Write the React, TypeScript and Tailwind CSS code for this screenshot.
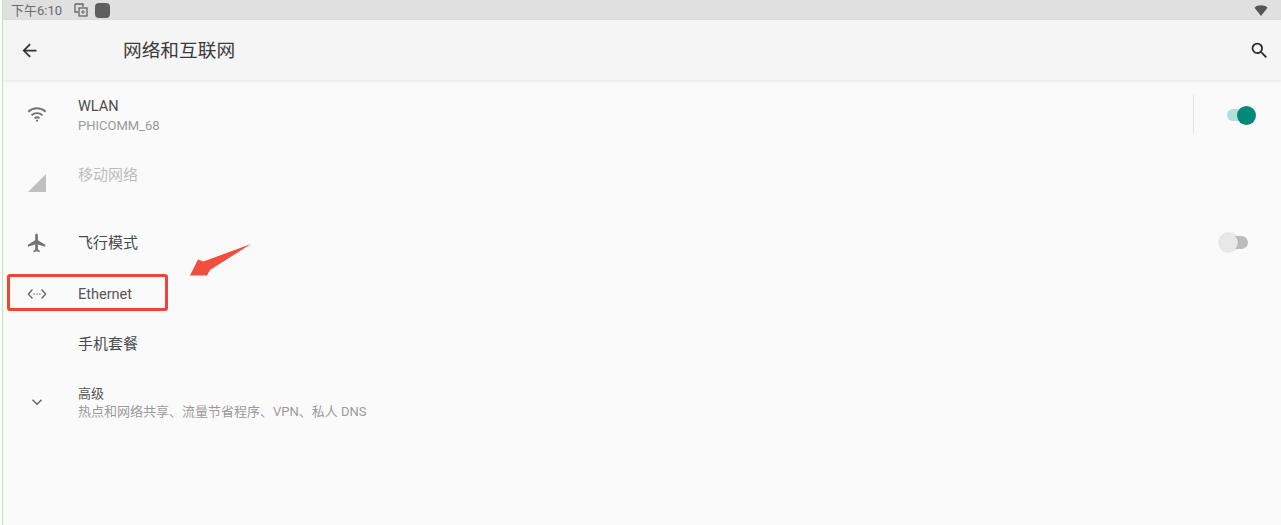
import React from "react";

function Row({ h, icon, title, sub, titleCls = "text-[15px] text-[#4a4a4a]", right }: { h: string; icon?: React.ReactNode; title: string; sub?: string; titleCls?: string; right?: React.ReactNode }) {
  return (
    <div className={`flex items-center ${h}`}>
      <div className="w-[75px] shrink-0 flex justify-center pr-[7px]">{icon}</div>
      <div className="flex-1 min-w-0">
        <div className={`leading-[18px] ${titleCls}`}>{title}</div>
        {sub && <div className="text-[13px] leading-[18px] text-[#9a9a9a]">{sub}</div>}
      </div>
      {right}
    </div>
  );
}

export default function App() {
  return (
    <div className="w-[1281px] h-[525px] overflow-hidden bg-white pl-[2px] font-['Roboto','Noto_Sans_CJK_SC',sans-serif]">
      <div className="relative h-full bg-[#fafafa] border-l border-[#b5f5a5]">
        {/* status bar */}
        <div className="h-[20px] bg-[#e0e0e0] flex items-center pl-[8px] pr-[13px] text-[#6a6a6a]">
          <span className="text-[13px] leading-none w-[62px]">下午6:10</span>
          <svg width="16" height="16" viewBox="0 0 16 16" fill="none" stroke="#666" strokeWidth="1.3">
            <path d="M2 2h8v3M2 2v8h3" />
            <rect x="6" y="6" width="8" height="8" />
            <path d="M8 10h4M10 8v4" strokeWidth="1" />
          </svg>
          <div className="ml-[6px] w-[15px] h-[15px] rounded-[4px] bg-[#5f5f5f]" />
          <div className="flex-1" />
          <svg width="14" height="13" viewBox="0 0 15 13"><path d="M0.5 3.5C2.5 1.5 5 .8 7.5 .8S12.500 1.500 14.500 3.500L7.500 12.500Z" fill="#555" /></svg>
        </div>
        {/* toolbar */}
        <div className="h-[60px] bg-[#f5f5f5] flex items-center shadow-[0_1px_3px_rgba(0,0,0,0.1)] relative">
          <div className="w-[120px] pl-[16px] shrink-0">
            <svg width="21" height="21" viewBox="0 0 24 24" fill="#333"><path d="M20 11H7.830l5.590-5.590L12 4l-8 8 8 8 1.410-1.410L7.830 13H20z" /></svg>
          </div>
          <div className="flex-1 pt-[2px] text-[18.7px] text-[#3a3a3a]">网络和互联网</div>
          <svg className="mr-[11px]" width="21" height="21" viewBox="0 0 24 24" fill="#2a2a2a"><path d="M15.500 14h-.790l-.280-.270A6.470 6.470 0 0 0 16 9.500 6.500 6.500 0 1 0 9.500 16c1.610 0 3.090-.590 4.230-1.570l.270.280v.790l5 4.990L20.490 19l-4.990-5zm-6 0C7.010 14 5 11.990 5 9.500S7.010 5 9.500 5 14 7.010 14 9.500 11.990 14 9.500 14z" /></svg>
        </div>
        {/* list */}
        <div className="flex flex-col pt-[2px]">
          <div className="flex items-center h-[66px]">
            <div className="w-[75px] shrink-0 flex justify-center pr-[7px]">
              <svg className="mb-[2px]" width="22" height="22" viewBox="0 0 24 24" fill="none" stroke="#757575" strokeWidth="2"><path d="M2.500 9.500C8 4.500 16 4.500 21.500 9.500" /><path d="M6 13.300c3.500-3 8.500-3 12 0" /><path d="M9.300 16.600c1.600-1.200 3.800-1.200 5.400 0" /><circle cx="12" cy="19.300" r="1.200" fill="#757575" stroke="none" /></svg>
            </div>
            <div className="flex-1 min-w-0 pt-[3px]">
              <div className="text-[14.5px] leading-[18px] text-[#4a4a4a]">WLAN</div>
              <div className="text-[13px] leading-[18px] mt-[1px] text-[#9a9a9a]">PHICOMM_68</div>
            </div>
            <div className="flex items-center h-[38px] mb-[2px] border-l border-[#e4e4e4] pl-[33px] pr-[27px]">
              <div className="relative mt-[2px] w-[27px] h-[12px] rounded-full bg-[#b2dfd8]">
                <div className="absolute right-[-2px] top-[-3px] w-[19px] h-[19px] rounded-full bg-[#00897b]" />
              </div>
            </div>
          </div>
          <Row
            h="h-[54px]"
            title="移动网络"
            titleCls="text-[15px] text-[#bdbdbd]"
            icon={<svg width="18" height="18" viewBox="0 0 18 18" className="mt-[16px]"><path d="M0 18L18 0V18Z" fill="#bfbfbf" /></svg>}
          />
          <Row
            h="h-[82px]"
            title="飞行模式"
            icon={<svg width="22" height="22" viewBox="0 0 24 24" fill="#757575"><path d="M21 16v-2l-8-5V3.500c0-.830-.670-1.500-1.500-1.500S10 2.670 10 3.500V9l-8 5v2l8-2.500V19l-2 1.500V22l3.500-1 3.500 1v-1.500L13 19v-5.500z" /></svg>}
            right={
              <div className="relative mb-[2px] w-[24px] h-[13px] mr-[33px] rounded-full bg-[#bdbdbd]">
                <div className="absolute left-[-5px] top-[-3px] w-[19px] h-[19px] rounded-full bg-[#e8e8e8] shadow-[0_0_2px_rgba(0,0,0,0.2)]" />
              </div>
            }
          />
          <Row
            h="h-[22px]"
            title="Ethernet"
            titleCls="text-[14.5px] text-[#555]"
            icon={<svg className="mb-[2px]" width="20" height="14" viewBox="0 0 22 14" fill="none" stroke="#666" strokeWidth="1.5"><path d="M6 2L1.500 7L6 12M16 2L20.500 7L16 12" /><circle cx="7.800" cy="7" r=".9" fill="#666" stroke="none" /><circle cx="11" cy="7" r=".9" fill="#666" stroke="none" /><circle cx="14.200" cy="7" r=".9" fill="#666" stroke="none" /></svg>}
          />
          <Row h="h-[76px]" title="手机套餐" />
          <Row
            h="h-[42px]"
            title="高级"
            titleCls="text-[13px] text-[#555]"
            sub="热点和网络共享、流量节省程序、VPN、私人 DNS"
            icon={<svg className="mb-[2px]" width="18" height="18" viewBox="0 0 24 24" fill="none" stroke="#666" strokeWidth="2"><path d="M6 9l6 6 6-6" /></svg>}
          />
        </div>
        {/* annotations */}
        <div className="absolute left-[4px] top-[274px] w-[161px] h-[37px] border-[3px] border-[#f0443a] rounded-[3px]" />
        <svg className="absolute left-[185px] top-[242px]" width="66" height="36" viewBox="0 0 66 36">
          <path d="M63 2L15.500 19.500L10 17.500L2 33.500L19 33.500L22 28Z" fill="#f24e3f" />
        </svg>
      </div>
    </div>
  );
}
